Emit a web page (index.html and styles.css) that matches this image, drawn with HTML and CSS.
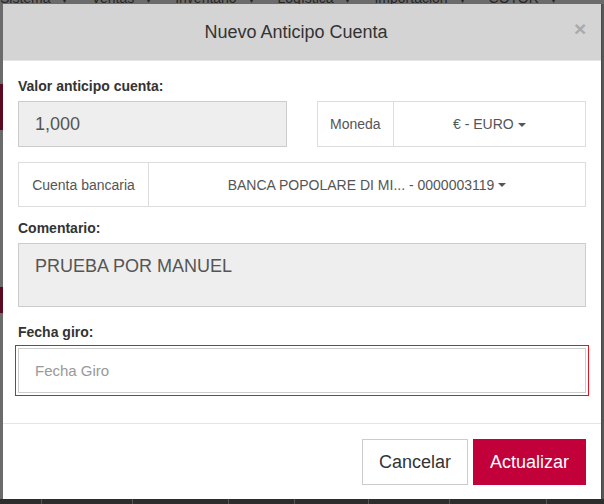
FILE: index.html
```html
<!DOCTYPE html>
<html lang="es">
<head>
<meta charset="utf-8">
<title>Nuevo Anticipo Cuenta</title>
<link rel="stylesheet" href="styles.css">
</head>
<body>
<div class="page">
  <nav class="topnav">
    <div class="navline">
      <span class="nav-item">Sistema <i>▾</i></span>
      <span class="nav-item">Ventas <i>▾</i></span>
      <span class="nav-item">Inventario <i>▾</i></span>
      <span class="nav-item">Logística <i>▾</i></span>
      <span class="nav-item">Importación <i>▾</i></span>
      <span class="nav-item">COTOR <i>▾</i></span>
    </div>
  </nav>
  <div class="main">
    <div class="side">
      <div class="blk blk-1"></div>
      <div class="blk blk-2"></div>
    </div>
    <div class="center"></div>
    <div class="rside"></div>
  </div>
  <div class="foot">
    <span class="col c1"></span><span class="col c2"></span><span class="col c3"></span><span class="col c4"></span><span class="col c5"></span><span class="col c6"></span><span class="col c7"></span>
  </div>
</div>

<div class="modal">
  <div class="mhead">
    <h4 class="mtitle">Nuevo Anticipo Cuenta</h4>
    <button class="close" type="button">×</button>
  </div>
  <div class="mbody">
    <div class="row2">
      <div class="field">
        <label class="lbl">Valor anticipo cuenta:</label>
        <div class="input disabled">1,000</div>
      </div>
      <div class="field bottom">
        <div class="group">
          <span class="addon">Moneda</span>
          <span class="select">€ - EURO <b class="caret"></b></span>
        </div>
      </div>
    </div>
    <div class="group group-bank">
      <span class="addon addon-wide">Cuenta bancaria</span>
      <span class="select">BANCA POPOLARE DI MI... - 0000003119 <b class="caret"></b></span>
    </div>
    <label class="lbl lbl-com">Comentario:</label>
    <div class="input textarea disabled">PRUEBA POR MANUEL</div>
    <label class="lbl lbl-fecha">Fecha giro:</label>
    <div class="input error"><span class="ph">Fecha Giro</span></div>
  </div>
  <div class="mfoot">
    <button class="btn btn-default" type="button">Cancelar</button>
    <button class="btn btn-primary" type="button">Actualizar</button>
  </div>
</div>
</body>
</html>
```

FILE: styles.css
```css
* { box-sizing: border-box; }
html, body { margin: 0; padding: 0; }
body {
  width: 604px;
  height: 504px;
  overflow: hidden;
  position: relative;
  background: #6b6b6b;
  font-family: "Liberation Sans", Arial, sans-serif;
}

/* background page (under overlay) */
.page {
  width: 604px;
  height: 504px;
  display: flex;
  flex-direction: column;
}
.topnav {
  height: 4px;
  overflow: hidden;
  flex: none;
}
.navline {
  margin-top: -12px;
  line-height: 20px;
  font-size: 14px;
  color: #262626;
  white-space: nowrap;
  display: flex;
  gap: 24px;
  padding-left: 0;
}
.nav-item i { font-style: normal; font-size: 10px; margin-left: 8px; }
.main {
  flex: 1;
  display: flex;
}
.side {
  width: 3px;
  display: flex;
  flex-direction: column;
}
.blk { background: #5a0b22; width: 3px; }
.blk-1 { margin-top: 80px; height: 46px; }
.blk-2 { margin-top: 157px; height: 26px; }
.center { flex: 1; }
.rside { width: 3px; background: #585858; border-left: 1px solid #4a4a4a; }
.foot {
  height: 5px;
  flex: none;
  background: #2d2d2d;
  position: relative;
  display: flex;
}
.col { height: 5px; border-right: 1px solid #555; }
.c1 { width: 42px; }
.c2 { width: 91px; }
.c3 { width: 96px; }
.c4 { width: 66px; }
.c5 { width: 74px; }
.c6 { width: 81px; }
.c7 { width: 97px; }

/* modal */
.modal {
  position: absolute;
  left: 3px;
  top: 4px;
  width: 598px;
  background: #fff;
  display: flex;
  flex-direction: column;
  color: #333;
}
.mhead {
  height: 57px;
  background: #d4d4d4;
  border-bottom: 1px solid #e5e5e5;
  display: flex;
  align-items: center;
  padding: 0 15px;
}
.mtitle {
  flex: 1;
  margin: 0;
  text-align: center;
  font-weight: normal;
  font-size: 18px;
  line-height: 20px;
  color: #333;
}
.close {
  border: 0;
  background: none;
  padding: 0;
  margin-top: -8px;
  width: 12px;
  font-family: "Liberation Sans", Arial, sans-serif;
  font-size: 21px;
  font-weight: bold;
  line-height: 1;
  color: #aaa;
}

.mbody {
  padding: 15px 15px 30px;
}
.lbl {
  display: block;
  font-weight: bold;
  font-size: 14px;
  line-height: 20px;
  color: #333;
  margin-bottom: 5px;
}
.row2 {
  display: grid;
  grid-template-columns: 1fr 1fr;
  column-gap: 30px;
}
.field.bottom { display: flex; align-items: flex-end; }
.field.bottom .group { width: 100%; }

.input {
  height: 46px;
  border: 1px solid #ccc;
  background: #fff;
  padding: 0 16px;
  font-size: 18px;
  color: #555;
  display: flex;
  align-items: center;
}
.input.disabled { background: #eee; }
.input.textarea {
  height: 64px;
  align-items: flex-start;
  padding-top: 12px;
  line-height: 20px;
}
.input.error {
  height: 45px;
  outline: 1px solid #e8141e;
  outline-offset: 2px;
}
.ph { color: #999; font-size: 15px; }

.group {
  display: flex;
  height: 46px;
  border: 1px solid #ddd;
  font-size: 14px;
  color: #555;
}
.group-bank { height: 45px; margin-top: 15px; }
.addon {
  display: flex;
  align-items: center;
  padding: 0 12px;
  border-right: 1px solid #ddd;
  white-space: nowrap;
}
.addon-wide { width: 130px; justify-content: center; padding: 0; }
.select {
  flex: 1;
  display: flex;
  align-items: center;
  justify-content: center;
  white-space: nowrap;
  color: #555;
}
.caret {
  display: inline-block;
  width: 0;
  height: 0;
  margin-left: 4px;
  margin-top: 1px;
  border-top: 4px solid #555;
  border-left: 4px solid transparent;
  border-right: 4px solid transparent;
}
.lbl-com { margin-top: 11px; }
.lbl-fecha { margin-top: 15px; margin-bottom: 6px; }

.mfoot {
  border-top: 1px solid #e5e5e5;
  padding: 15px 15px 14px;
  display: flex;
  justify-content: flex-end;
  gap: 5px;
}
.btn {
  height: 46px;
  padding: 0 16px;
  font-family: "Liberation Sans", Arial, sans-serif;
  font-size: 18px;
  border: 1px solid #ccc;
  background: #fff;
  color: #333;
  border-radius: 0;
}
.btn-primary {
  background: #c2003a;
  border-color: #c2003a;
  color: #fff;
}
```
